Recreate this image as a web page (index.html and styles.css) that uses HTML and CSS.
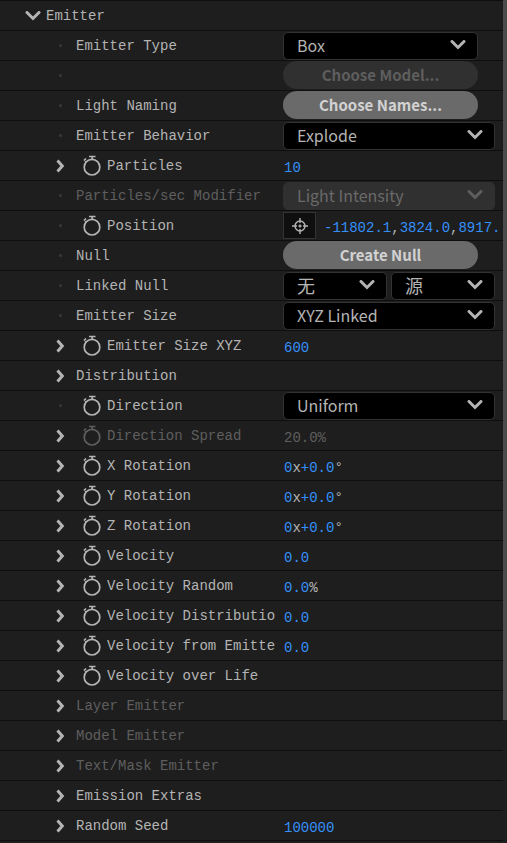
FILE: index.html
```html
<!DOCTYPE html>
<html lang="en">
<head>
<meta charset="utf-8">
<meta name="viewport" content="width=device-width, initial-scale=1">
<title>Emitter</title>
<link rel="stylesheet" href="styles.css">
</head>
<body>
<svg class="sprite" aria-hidden="true">
  <symbol id="down" viewBox="0 0 16 10"><path d="M2 1.500l6 6L14 1.500" stroke-linecap="round"/></symbol>
  <symbol id="right" viewBox="0 0 10 14"><path d="M2.500 1.600L7.300 7l-4.800 5.400"/></symbol>
  <symbol id="watch" viewBox="0 0 20 22"><circle cx="10" cy="12.200" r="7.800"/><path d="M7 1.500h6.500M10.200 1.500v3M2 4.500l2.500 2.500M2 5.500l2-2"/></symbol>
  <symbol id="target" viewBox="0 0 18 18"><circle cx="9" cy="9" r="5"/><path d="M9 1v5M9 12v5M1 9h5M12 9h5M7.500 9h3M9 7.500v3"/></symbol>
</svg>
<main class="panel">
  <div class="rows">
    <div class="row"><div class="name root"><button class="twirl" aria-label="Collapse Emitter"><svg class="down"><use href="#down"/></svg></button><span class="label">Emitter</span></div></div>
    <div class="row"><div class="name"><i class="dot"></i><label class="label" for="type">Emitter Type</label></div><div class="value"><span class="pick short"><select id="type"><option>Box</option></select><svg class="down"><use href="#down"/></svg></span></div></div>
    <div class="row"><div class="name"><i class="dot"></i></div><div class="value"><button class="pill" disabled>Choose Model...</button></div></div>
    <div class="row"><div class="name"><i class="dot"></i><span class="label">Light Naming</span></div><div class="value"><button class="pill">Choose Names...</button></div></div>
    <div class="row"><div class="name"><i class="dot"></i><label class="label" for="behavior">Emitter Behavior</label></div><div class="value"><span class="pick"><select id="behavior"><option>Explode</option></select><svg class="down"><use href="#down"/></svg></span></div></div>
    <div class="row"><div class="name"><button class="twirl" aria-label="Expand Particles"><svg class="right"><use href="#right"/></svg></button><button class="watch" aria-label="Animate Particles"><svg><use href="#watch"/></svg></button><span class="label">Particles</span></div><div class="value"><button class="num">10</button></div></div>
    <div class="row off"><div class="name"><i class="dot"></i><label class="label" for="modifier">Particles/sec Modifier</label></div><div class="value"><span class="pick"><select id="modifier" disabled><option>Light Intensity</option></select><svg class="down"><use href="#down"/></svg></span></div></div>
    <div class="row"><div class="name"><i class="dot"></i><button class="watch" aria-label="Animate Position"><svg><use href="#watch"/></svg></button><span class="label">Position</span></div><div class="value"><button class="target" aria-label="Pick position"><svg><use href="#target"/></svg></button><span class="nums"><button class="num">-11802.1</button>,<button class="num">3824.0</button>,<button class="num">8917.</button></span></div></div>
    <div class="row"><div class="name"><i class="dot"></i><span class="label">Null</span></div><div class="value"><button class="pill">Create Null</button></div></div>
    <div class="row"><div class="name"><i class="dot"></i><label class="label" for="linked">Linked Null</label></div><div class="value"><span class="pick cjk"><select id="linked"><option>无</option></select><svg class="down"><use href="#down"/></svg></span><span class="pick cjk"><select aria-label="Linked Null source"><option>源</option></select><svg class="down"><use href="#down"/></svg></span></div></div>
    <div class="row"><div class="name"><i class="dot"></i><label class="label" for="size">Emitter Size</label></div><div class="value"><span class="pick"><select id="size"><option>XYZ Linked</option></select><svg class="down"><use href="#down"/></svg></span></div></div>
    <div class="row"><div class="name"><button class="twirl" aria-label="Expand Emitter Size XYZ"><svg class="right"><use href="#right"/></svg></button><button class="watch" aria-label="Animate Emitter Size XYZ"><svg><use href="#watch"/></svg></button><span class="label">Emitter Size XYZ</span></div><div class="value"><button class="num">600</button></div></div>
    <div class="row"><div class="name"><button class="twirl" aria-label="Expand Distribution"><svg class="right"><use href="#right"/></svg></button><span class="label">Distribution</span></div></div>
    <div class="row"><div class="name"><i class="dot"></i><button class="watch" aria-label="Animate Direction"><svg><use href="#watch"/></svg></button><label class="label" for="direction">Direction</label></div><div class="value"><span class="pick"><select id="direction"><option>Uniform</option></select><svg class="down"><use href="#down"/></svg></span></div></div>
    <div class="row off"><div class="name"><button class="twirl" aria-label="Expand Direction Spread"><svg class="right"><use href="#right"/></svg></button><button class="watch" aria-label="Animate Direction Spread" disabled><svg><use href="#watch"/></svg></button><span class="label">Direction Spread</span></div><div class="value"><span class="nums"><button class="num" disabled>20.0</button>%</span></div></div>
    <div class="row"><div class="name"><button class="twirl" aria-label="Expand X Rotation"><svg class="right"><use href="#right"/></svg></button><button class="watch" aria-label="Animate X Rotation"><svg><use href="#watch"/></svg></button><span class="label">X Rotation</span></div><div class="value"><span class="nums"><button class="num">0</button>x<button class="num">+0.0</button>°</span></div></div>
    <div class="row"><div class="name"><button class="twirl" aria-label="Expand Y Rotation"><svg class="right"><use href="#right"/></svg></button><button class="watch" aria-label="Animate Y Rotation"><svg><use href="#watch"/></svg></button><span class="label">Y Rotation</span></div><div class="value"><span class="nums"><button class="num">0</button>x<button class="num">+0.0</button>°</span></div></div>
    <div class="row"><div class="name"><button class="twirl" aria-label="Expand Z Rotation"><svg class="right"><use href="#right"/></svg></button><button class="watch" aria-label="Animate Z Rotation"><svg><use href="#watch"/></svg></button><span class="label">Z Rotation</span></div><div class="value"><span class="nums"><button class="num">0</button>x<button class="num">+0.0</button>°</span></div></div>
    <div class="row"><div class="name"><button class="twirl" aria-label="Expand Velocity"><svg class="right"><use href="#right"/></svg></button><button class="watch" aria-label="Animate Velocity"><svg><use href="#watch"/></svg></button><span class="label">Velocity</span></div><div class="value"><button class="num">0.0</button></div></div>
    <div class="row"><div class="name"><button class="twirl" aria-label="Expand Velocity Random"><svg class="right"><use href="#right"/></svg></button><button class="watch" aria-label="Animate Velocity Random"><svg><use href="#watch"/></svg></button><span class="label">Velocity Random</span></div><div class="value"><span class="nums"><button class="num">0.0</button>%</span></div></div>
    <div class="row"><div class="name"><button class="twirl" aria-label="Expand Velocity Distribution"><svg class="right"><use href="#right"/></svg></button><button class="watch" aria-label="Animate Velocity Distribution"><svg><use href="#watch"/></svg></button><span class="label">Velocity Distributio</span></div><div class="value"><button class="num">0.0</button></div></div>
    <div class="row"><div class="name"><button class="twirl" aria-label="Expand Velocity from Emitter"><svg class="right"><use href="#right"/></svg></button><button class="watch" aria-label="Animate Velocity from Emitter"><svg><use href="#watch"/></svg></button><span class="label">Velocity from Emitte</span></div><div class="value"><button class="num">0.0</button></div></div>
    <div class="row"><div class="name"><button class="twirl" aria-label="Expand Velocity over Life"><svg class="right"><use href="#right"/></svg></button><button class="watch" aria-label="Animate Velocity over Life"><svg><use href="#watch"/></svg></button><span class="label">Velocity over Life</span></div></div>
    <div class="row off"><div class="name"><button class="twirl" aria-label="Expand Layer Emitter"><svg class="right"><use href="#right"/></svg></button><span class="label">Layer Emitter</span></div></div>
    <div class="row off"><div class="name"><button class="twirl" aria-label="Expand Model Emitter"><svg class="right"><use href="#right"/></svg></button><span class="label">Model Emitter</span></div></div>
    <div class="row off"><div class="name"><button class="twirl" aria-label="Expand Text/Mask Emitter"><svg class="right"><use href="#right"/></svg></button><span class="label">Text/Mask Emitter</span></div></div>
    <div class="row"><div class="name"><button class="twirl" aria-label="Expand Emission Extras"><svg class="right"><use href="#right"/></svg></button><span class="label">Emission Extras</span></div></div>
    <div class="row"><div class="name"><button class="twirl" aria-label="Expand Random Seed"><svg class="right"><use href="#right"/></svg></button><span class="label">Random Seed</span></div><div class="value"><button class="num">100000</button></div></div>
    <div class="row end"></div>
  </div>
  <div class="rail"><div class="thumb"></div></div>
</main>
</body>
</html>
```
FILE: styles.css
```css
* { box-sizing: border-box; }
body {
  margin: 0;
  background: #1e1e1e;
  color: #b4b4b4;
  font: 14px/20px "Liberation Mono", "Noto Sans CJK SC", monospace;
}
button {
  margin: 0;
  padding: 0;
  border: 0;
  background: none;
  color: inherit;
  font: inherit;
}
svg {
  display: block;
  fill: none;
  stroke: #b4b4b4;
}
.sprite { display: none; }

.panel {
  display: grid;
  grid-template-columns: minmax(0, 1fr) 4px;
  min-height: 100vh;
}
.rail { background: #1e1e1e; }
.thumb {
  height: 720px;
  background: #4b4b4b;
}

.row {
  display: grid;
  grid-template-columns: 283px minmax(0, 1fr);
  height: 30px;
  border-top: 1px solid #0e0e0e;
}
.end { height: 3px; }

.name {
  display: flex;
  align-items: center;
  min-width: 0;
  padding: 0 8px 0 50px;
}
.name.root { padding-left: 20px; }
.root .twirl { width: 26px; margin-right: 0; }
.label {
  overflow: hidden;
  white-space: nowrap;
}
.twirl, .dot {
  display: flex;
  flex: none;
  justify-content: center;
  align-items: center;
  width: 20px;
  margin-right: 6px;
}
.dot::before {
  content: "";
  width: 3px;
  height: 3px;
  border-radius: 50%;
  background: #3a3a3a;
}
.down {
  width: 16px;
  height: 10px;
  stroke-width: 3;
}
.right {
  width: 10px;
  height: 14px;
  stroke-width: 3;
}
.watch {
  flex: none;
  width: 31px;
  padding-left: 6px;
}
.watch svg {
  width: 20px;
  height: 22px;
  stroke-width: 1.7;
}
.off { color: #5e5e5e; }
.off .watch svg, .off .pick svg { stroke: #5e5e5e; }

.value {
  display: flex;
  align-items: center;
  gap: 4px;
  min-width: 0;
}
.num { color: #3490fa; }
.num, .nums {
  flex: none;
  padding-top: 4px;
  white-space: nowrap;
}
.nums .num { padding-top: 0; }
.value > .num, .nums { margin-left: 1px; }
.off .num { color: inherit; }

.pill {
  align-self: flex-start;
  width: 195px;
  height: 28px;
  border-radius: 14px;
  background: #6a6a6a;
  color: #d2d2d2;
  font: bold 15px/28px "Noto Sans CJK SC", sans-serif;
}
.pill:disabled {
  background: #303030;
  color: #5e5e5e;
}

.pick {
  display: grid;
  flex: 1;
  align-items: center;
  min-width: 0;
}
.pick:last-child { margin-right: 8px; }
.pick.short {
  flex: none;
  width: 195px;
  margin-right: 0;
}
.pick select, .pick svg { grid-area: 1 / 1; }
.pick select {
  appearance: none;
  width: 100%;
  height: 28px;
  padding: 0 32px 2px 13px;
  border: 1px solid #333;
  border-radius: 5px;
  background: #000;
  color: #b4b4b4;
  font: 16px/24px "Noto Sans CJK SC", sans-serif;
}
.pick.cjk select { font-size: 18px; }
.pick select:disabled {
  border-color: #303030;
  background: #303030;
  color: #6a6a6a;
  opacity: 1;
}
.pick svg {
  justify-self: end;
  margin: 0 12px 2px 0;
  pointer-events: none;
}
.target {
  display: flex;
  flex: none;
  justify-content: center;
  align-items: center;
  width: 33px;
  height: 27px;
  border: 1px solid #333;
  background: #0f0f0f;
}
.target svg {
  width: 18px;
  height: 18px;
  stroke-width: 1.4;
}
.target + .nums {
  flex: 1;
  min-width: 0;
  margin-left: 4px;
  overflow: hidden;
}
```
